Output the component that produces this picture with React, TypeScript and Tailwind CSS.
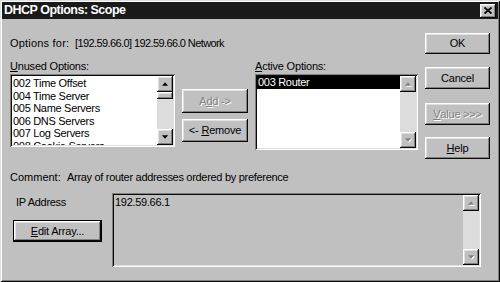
import React from 'react';

const raised =
  'shadow-[inset_-1px_-1px_#0a0a0a,inset_1px_1px_#ffffff,inset_-2px_-2px_#808080,inset_2px_2px_#dfdfdf]';
const sunken =
  'shadow-[inset_1px_1px_#808080,inset_-1px_-1px_#ffffff,inset_2px_2px_#0a0a0a,inset_-2px_-2px_#dfdfdf]';

function Arrow({ dir, disabled }: { dir: 'up' | 'down'; disabled?: boolean }) {
  const pts = dir === 'up' ? '0,4 3.5,0 7,4' : '0,0 3.5,4 7,0';
  return (
    <svg width="7" height="5" viewBox="0 0 8 5" className="overflow-visible">
      {disabled && <polygon points={pts} fill="#ffffff" transform="translate(1,1)" />}
      <polygon points={pts} fill={disabled ? '#808080' : '#000000'} />
    </svg>
  );
}

function ArrowBtn({ dir, disabled }: { dir: 'up' | 'down'; disabled?: boolean }) {
  return (
    <div className={`flex h-[16px] w-[16px] items-center justify-center bg-[#c0c0c0] ${raised}`}>
      <Arrow dir={dir} disabled={disabled} />
    </div>
  );
}

function ScrollBar({ thumb, disabled }: { thumb?: boolean; disabled?: boolean }) {
  return (
    <div className="flex h-full w-[16px] shrink-0 flex-col bg-[#dcdcdc]">
      <ArrowBtn dir="up" disabled={disabled} />
      {thumb && <div className={`h-[7px] w-full bg-[#c0c0c0] ${raised}`} />}
      <div className="flex-1" />
      <ArrowBtn dir="down" disabled={disabled} />
    </div>
  );
}

function Btn({
  children,
  disabled,
  className = '',
}: {
  children: React.ReactNode;
  disabled?: boolean;
  className?: string;
}) {
  return (
    <div
      className={`flex items-center justify-center bg-[#c0c0c0] text-[11px] tracking-[-0.2px] ${raised} ${
        disabled ? 'text-[#808080] [text-shadow:1px_1px_0_#ffffff]' : 'text-black'
      } ${className}`}
    >
      {children}
    </div>
  );
}

const U = ({ children }: { children: React.ReactNode }) => (
  <span className="underline underline-offset-[1px]">{children}</span>
);

const unused = [
  '002 Time Offset',
  '004 Time Server',
  '005 Name Servers',
  '006 DNS Servers',
  '007 Log Servers',
  '008 Cookie Servers',
];

export default function App() {
  return (
    <div className="h-[282px] w-[500px] overflow-hidden bg-[#c0c0c0] font-['Liberation_Sans',Arial,sans-serif] text-black shadow-[inset_1px_1px_#dfdfdf,inset_-1px_-1px_#0a0a0a,inset_2px_2px_#ffffff,inset_-2px_-2px_#808080]">
      {/* Title bar */}
      <div className="mx-[2px] mt-[2px] flex h-[17px] items-center justify-between bg-[#1a1a1a] pl-[2px] pr-[2px]">
        <span className="text-[12.5px] font-bold tracking-[-0.5px] text-white">DHCP Options: Scope</span>
        <div className={`flex h-[14px] w-[16px] items-center justify-center bg-[#c0c0c0] ${raised}`}>
          <svg width="8" height="7" viewBox="0 0 8 7">
            <path d="M0.5 0.5 L7.5 6.5 M7.5 0.5 L0.5 6.5" stroke="#000" strokeWidth="1.8" />
          </svg>
        </div>
      </div>

      <div className="pl-[10px] pt-[14px]">
        {/* Top section */}
        <div className="flex">
          <div className="w-[410px]">
            <div className="mt-[3px] flex h-[14px] items-center text-[11px]">
              <span className="w-[65px] tracking-[0.2px]">Options for:</span>
              <span className="tracking-[-0.6px]">[192.59.66.0] 192.59.66.0 Network</span>
            </div>

            <div className="mt-[9px] flex">
              <div className="w-[165px]">
                <div className="flex h-[14px] items-center text-[11px] tracking-[-0.2px]">
                  <U>U</U>nused Options:
                </div>
                <div className={`mt-[1px] flex h-[73px] bg-white p-[2px] ${sunken}`}>
                  <div className="flex-1 overflow-hidden pl-[1px] pt-[1px] text-[11px] leading-[12.5px] tracking-[-0.3px]">
                    {unused.map((u) => (
                      <div key={u} className="whitespace-nowrap">
                        {u}
                      </div>
                    ))}
                  </div>
                  <ScrollBar thumb />
                </div>
              </div>

              <div className="ml-[7px] flex w-[66px] flex-col pt-[30px]">
                <Btn disabled className="h-[24px]">
                  A<U>d</U>d -&gt;
                </Btn>
                <Btn className="mt-[6px] h-[23px]">
                  &lt;-&nbsp;<U>R</U>emove
                </Btn>
              </div>

              <div className="ml-[7px] w-[163px]">
                <div className="flex h-[14px] items-center text-[11px] tracking-[-0.2px]">
                  <U>A</U>ctive Options:
                </div>
                <div className={`mt-[1px] flex h-[76px] bg-white p-[2px] ${sunken}`}>
                  <div className="flex-1 overflow-hidden text-[11px] leading-[12.5px] tracking-[-0.3px]">
                    <div className="bg-black pl-[1px] text-white">003 Router</div>
                  </div>
                  <ScrollBar disabled />
                </div>
              </div>
            </div>
          </div>

          <div className="ml-[5px] flex w-[65px] flex-col">
            <Btn className="h-[21px]">OK</Btn>
            <Btn className="mt-[13px] h-[22px]">Cancel</Btn>
            <Btn disabled className="mt-[14px] h-[22px]">
              <U>V</U>alue &gt;&gt;&gt;
            </Btn>
            <Btn className="mt-[12px] h-[22px]">
              <U>H</U>elp
            </Btn>
          </div>
        </div>

        {/* Comment */}
        <div className="mt-[11px] flex h-[14px] items-center text-[11px]">
          <span className="w-[57px]">Comment:</span>
          <span className="tracking-[-0.3px]">Array of router addresses ordered by preference</span>
        </div>

        {/* Bottom section */}
        <div className="mt-[9px] flex h-[74px]">
          <div className="w-[102px]">
            <div className="ml-[6px] mt-[2px] h-[14px] text-[11px] leading-[14px] tracking-[-0.3px]">IP Address</div>
            <div className="ml-[3px] mt-[11px] h-[22px] w-[89px] border border-black">
              <Btn className="h-full w-full">
                <U>E</U>dit Array...
              </Btn>
            </div>
          </div>
          <div className={`flex h-[74px] w-[369px] bg-[#c0c0c0] p-[2px] ${sunken}`}>
            <div className="flex-1 pl-[1px] pt-[1px] text-[11px] leading-[12.5px] tracking-[-0.3px]">192.59.66.1</div>
            <ScrollBar disabled />
          </div>
        </div>
      </div>
    </div>
  );
}
